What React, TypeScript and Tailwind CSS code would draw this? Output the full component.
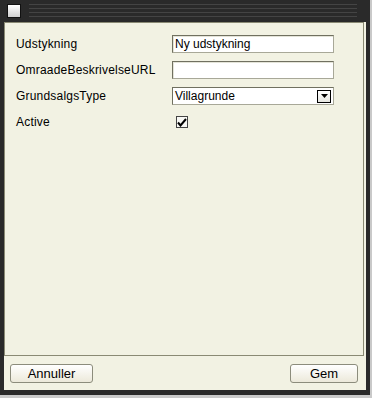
import React from "react";

const font = { fontFamily: '"Liberation Sans", Arial, sans-serif' };

function TextInput({ value }: { value: string }) {
  return (
    <div className="h-[18px] w-[162px] bg-white border border-t-[#707060] border-l-[#707060] border-r-[#a8a898] border-b-[#a8a898] shadow-[inset_1px_1px_0_#e4e4d8] flex items-center px-[2px] text-[12px] text-black leading-none">
      {value}
    </div>
  );
}

function Label({ children }: { children: React.ReactNode }) {
  return (
    <div className="h-[18px] flex items-center text-[12px] text-black leading-none tracking-[0.2px]">
      {children}
    </div>
  );
}

export default function App() {
  return (
    <div className="w-[372px] h-[398px] bg-[#c9c9c9]" style={font}>
      <div className="w-[370px] h-[395px] bg-[#2a2a2a] flex flex-col">
        {/* title bar */}
        <div className="h-[22px] flex items-start pt-[4px] pl-[7px] pr-[13px] gap-[8px]">
          <div className="w-[14px] h-[14px] bg-[#111] p-[1px]">
            <div className="w-full h-full bg-gradient-to-b from-white to-[#d0d0d0]" />
          </div>
          <div className="flex-1 flex flex-col gap-[3px] pt-[0px]">
            <div className="h-px bg-[#444]" />
            <div className="h-px bg-[#444]" />
            <div className="h-px bg-[#444]" />
            <div className="h-px bg-[#444]" />
          </div>
        </div>
        {/* body */}
        <div className="flex-1 mx-[4px] mb-[5px] bg-[#f2f2e3] flex flex-col">
          <div className="flex-1 mr-[2px] border border-[#8a8a74] pt-[12px] pl-[11px]">
            <div className="grid grid-cols-[156px_162px] gap-y-[8px]">
              <Label>Udstykning</Label>
              <TextInput value="Ny udstykning" />
              <Label>OmraadeBeskrivelseURL</Label>
              <TextInput value="" />
              <Label>GrundsalgsType</Label>
              <div className="h-[18px] w-[162px] bg-white border border-t-[#707060] border-l-[#707060] border-r-[#a8a898] border-b-[#a8a898] flex items-center pl-[2px] pr-[2px] text-[12px] text-black leading-none">
                <span className="flex-1">Villagrunde</span>
                <div className="w-[14px] h-[13px] border border-black bg-gradient-to-b from-white to-[#e6e6e0] flex items-center justify-center">
                  <svg width="7" height="4" viewBox="0 0 7 4">
                    <polygon points="0,0 7,0 3.5,4" fill="#000" />
                  </svg>
                </div>
              </div>
              <Label>Active</Label>
              <div className="h-[18px] flex items-center pl-[4px]">
                <div className="w-[12px] h-[12px] border border-[#444] bg-[#f8f8f4] flex items-center justify-center">
                  <svg width="10" height="9" viewBox="0 0 10 9">
                    <path d="M1 4.5 L3.5 7.5 L9 1" stroke="#000" strokeWidth="2" fill="none" />
                  </svg>
                </div>
              </div>
            </div>
          </div>
          <div className="h-[34px] flex items-start justify-between pt-[8px] pl-[6px] pr-[8px]">
            <button className="w-[83px] h-[19px] rounded-[3px] border border-[#8c8c7c] bg-gradient-to-b from-white to-[#ece9da] text-[13px] text-black leading-none flex items-center justify-center">
              Annuller
            </button>
            <button className="w-[68px] h-[19px] rounded-[3px] border border-[#8c8c7c] bg-gradient-to-b from-white to-[#ece9da] text-[13px] text-black leading-none flex items-center justify-center">
              Gem
            </button>
          </div>
        </div>
      </div>
    </div>
  );
}
